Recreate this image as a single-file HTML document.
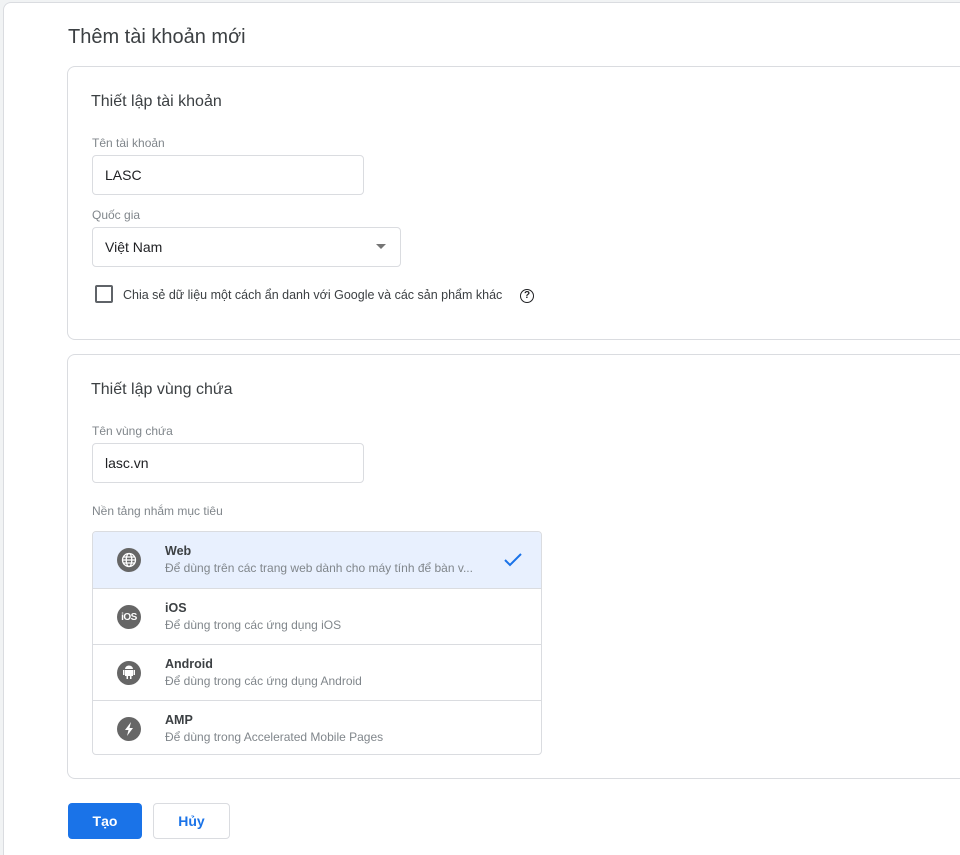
<!DOCTYPE html>
<html><head><meta charset="utf-8"><style>
*{box-sizing:border-box;margin:0;padding:0}
html{width:960px;height:855px;overflow:hidden}
body{width:960px;height:855px;overflow:hidden;background:#f1f3f4;font-family:"Liberation Sans",Arial,sans-serif;color:#202124;position:relative}
.outer{position:absolute;left:3px;top:2px;width:957px;height:853px;background:#fff;border:1px solid #dadce0;border-right:none;border-bottom:none;border-radius:8px 0 0 0}
.abs{position:absolute}
.title{left:68px;top:26px;font-size:20px;color:#3c4043}
.card{position:absolute;left:67px;width:893px;border:1px solid #dadce0;border-right:none;border-radius:8px 0 0 8px;background:#fff}
.h{font-size:16px;color:#3c4043}
.lbl{font-size:12px;color:#80868b}
.inp{border:1px solid #dadce0;border-radius:4px;font-size:14px;color:#202124;padding-left:12px;display:flex;align-items:center}
.list{left:92px;top:531px;width:450px;height:224px;border:1px solid #dadce0;border-radius:4px;overflow:hidden}
.row{position:absolute;left:0;width:448px;height:56px;border-top:1px solid #dadce0}
.row .ic{position:absolute;left:24px;top:16px;width:24px;height:24px;border-radius:50%;background:#666;display:flex;align-items:center;justify-content:center}
.row .t{position:absolute;left:72px;top:12px;font-size:12.5px;font-weight:bold;color:#3c4043}
.row .s{position:absolute;left:72px;top:29px;font-size:12px;color:#80868b;white-space:nowrap}
</style></head><body>
<div class="outer"></div>
<div class="abs title">Thêm tài khoản mới</div>

<div class="card" style="top:66px;height:274px"></div>
<div class="abs h" style="left:91px;top:93px">Thiết lập tài khoản</div>
<div class="abs lbl" style="left:92px;top:136px">Tên tài khoản</div>
<div class="abs inp" style="left:92px;top:155px;width:272px;height:40px">LASC</div>
<div class="abs lbl" style="left:92px;top:208px">Quốc gia</div>
<div class="abs inp" style="left:92px;top:227px;width:309px;height:40px">Việt Nam</div>
<div class="abs" style="left:376px;top:244px;width:0;height:0;border-left:5px solid transparent;border-right:5px solid transparent;border-top:5px solid #757575"></div>
<div class="abs" style="left:95px;top:285px;width:18px;height:18px;border:2px solid #5f6368;border-radius:2px"></div>
<div class="abs" style="left:123px;top:288px;font-size:12.5px;color:#3c4043;white-space:nowrap">Chia sẻ dữ liệu một cách ẩn danh với Google và các sản phẩm khác</div>
<div class="abs" style="left:520px;top:289px;width:14px;height:14px;border:1.5px solid #202124;border-radius:50%;font-size:10px;font-weight:bold;text-align:center;line-height:11px">?</div>

<div class="card" style="top:354px;height:425px"></div>
<div class="abs h" style="left:91px;top:381px">Thiết lập vùng chứa</div>
<div class="abs lbl" style="left:92px;top:424px">Tên vùng chứa</div>
<div class="abs inp" style="left:92px;top:443px;width:272px;height:40px">lasc.vn</div>
<div class="abs lbl" style="left:92px;top:504px">Nền tảng nhắm mục tiêu</div>

<div class="abs list">
 <div class="row" style="top:0;border-top:none;background:#e8f0fe;height:56px">
  <div class="ic"><svg width="16" height="16" viewBox="0 0 16 16" fill="none" stroke="#fff" stroke-width="1.3"><circle cx="8" cy="8" r="6.5"/><ellipse cx="8" cy="8" rx="2.8" ry="6.5"/><path d="M1.5 8h13M2.5 5h11M2.5 11h11"/></svg></div>
  <div class="t">Web</div><div class="s">Để dùng trên các trang web dành cho máy tính để bàn v...</div>
  <svg class="abs" style="left:410px;top:20px" width="20" height="16" viewBox="0 0 20 16"><path d="M2 8l5 5L18 2" fill="none" stroke="#1a73e8" stroke-width="2"/></svg>
 </div>
 <div class="row" style="top:56px">
  <div class="ic" style="font-size:10px;font-weight:bold;color:#fff;letter-spacing:-0.5px">iOS</div>
  <div class="t">iOS</div><div class="s">Để dùng trong các ứng dụng iOS</div>
 </div>
 <div class="row" style="top:112px">
  <div class="ic"><svg width="14" height="16" viewBox="0 0 14 16"><path d="M3 4a4 3.5 0 0 1 8 0zM3 5h8v6H3zM1 5h1.5v5H1zM11.5 5H13v5h-1.5zM4.5 11h1.5v3H4.5zM8 11h1.5v3H8z" fill="#fff"/></svg></div>
  <div class="t">Android</div><div class="s">Để dùng trong các ứng dụng Android</div>
 </div>
 <div class="row" style="top:168px">
  <div class="ic"><svg width="12" height="16" viewBox="0 0 12 16"><path d="M8 1L2 9h3.5L4 15l6-8H6.5z" fill="#fff"/></svg></div>
  <div class="t">AMP</div><div class="s">Để dùng trong Accelerated Mobile Pages</div>
 </div>
</div>

<div class="abs" style="left:68px;top:803px;width:74px;height:36px;background:#1a73e8;border-radius:4px;color:#fff;font-size:14px;font-weight:bold;text-align:center;line-height:36px">Tạo</div>
<div class="abs" style="left:153px;top:803px;width:77px;height:36px;border:1px solid #dadce0;border-radius:4px;color:#1a73e8;font-size:14px;font-weight:bold;text-align:center;line-height:34px">Hủy</div>
</body></html>
